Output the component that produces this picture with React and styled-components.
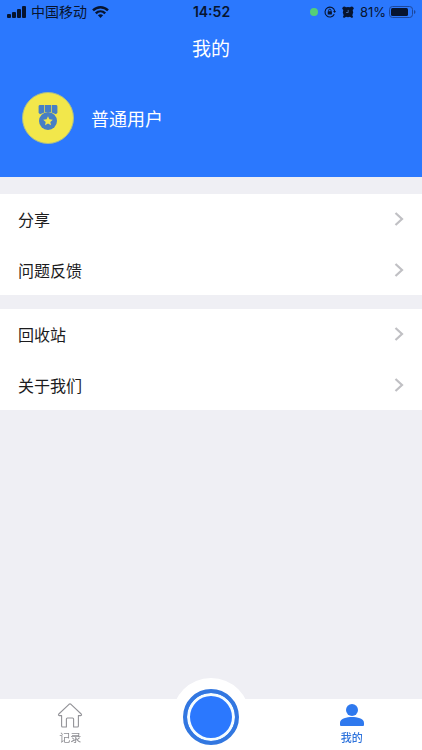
import React from "react";
import styled, { createGlobalStyle } from "styled-components";

const blue = "#2b78fe";
const ink = "#07142f";

const GlobalStyle = createGlobalStyle`
  * { box-sizing: border-box; }
  body {
    margin: 0;
    background: #efeff4;
    font-family: "Noto Sans CJK SC", "Liberation Sans", sans-serif;
  }
`;

const Page = styled.div`
  min-height: 100vh;
  display: flex;
  flex-direction: column;
`;

const Header = styled.header`
  background: ${blue};
  color: #fff;
  padding-bottom: 33px;
`;

const StatusBar = styled.div`
  height: 24px;
  padding: 0 6px 0 7px;
  display: grid;
  grid-template-columns: 1fr auto 1fr;
  align-items: center;
  color: ${ink};
  font-family: Inter, "Noto Sans CJK SC", sans-serif;
  font-size: 13px;
  line-height: 20px;
`;

const StatusGroup = styled.div`
  display: flex;
  align-items: center;
  gap: ${(p) => p.$gap}px;
  justify-content: ${(p) => (p.$end ? "flex-end" : "flex-start")};
`;

const Carrier = styled.span`
  font-size: 14px;
`;

const Clock = styled.time`
  font-size: 14px;
  font-weight: 600;
`;

const ActiveDot = styled.span`
  width: 8px;
  height: 8px;
  border-radius: 50%;
  background: #55cf78;
`;

const Title = styled.h1`
  margin: 0;
  height: 48px;
  font-size: 19px;
  line-height: 48px;
  font-weight: 400;
  text-align: center;
`;

const Profile = styled.section`
  display: flex;
  align-items: center;
  gap: 17px;
  padding: 20px 22px 0;
`;

const Avatar = styled.div`
  width: 52px;
  height: 52px;
  border-radius: 50%;
  background: #f2e74b;
  border: 1px solid #a9bd8c;
  display: grid;
  place-items: center;
`;

const UserName = styled.span`
  font-size: 18px;
  line-height: 26px;
`;

const Menu = styled.main`
  flex: 1;
  display: flex;
  flex-direction: column;
  gap: 14px;
  padding: 17px 0 40px;
`;

const MenuGroup = styled.nav`
  background: #fff;
  display: flex;
  flex-direction: column;
  gap: 1px;
`;

const MenuRow = styled.a`
  height: 50px;
  padding: 0 18px;
  display: flex;
  align-items: center;
  justify-content: space-between;
  color: #1c1c1e;
  font-size: 16px;
  line-height: 24px;
  text-decoration: none;
`;

const TabBar = styled.nav`
  position: sticky;
  bottom: 0;
  height: 51px;
  background: #fff;
  display: grid;
  grid-template-columns: 1fr 1fr 1fr;
  justify-items: center;
`;

const Tab = styled.a`
  display: flex;
  flex-direction: column;
  align-items: center;
  gap: 1px;
  padding-top: 4px;
  color: ${(p) => (p.$active ? "#2f74dc" : "#8e8e93")};
  font-size: 11px;
  line-height: 16px;
  font-weight: ${(p) => (p.$active ? 500 : 400)};
  text-decoration: none;
`;

const RecordHolder = styled.div`
  width: 78px;
  height: 78px;
  margin-top: -21px;
  border-radius: 50%;
  background: #fff;
  display: grid;
  place-items: center;
`;

const RecordButton = styled.button`
  width: 56px;
  height: 56px;
  padding: 0;
  border: 4px solid #3277e0;
  border-radius: 50%;
  background: ${blue};
  box-shadow: inset 0 0 0 3px #f4fcff;
`;

const SignalIcon = () => (
  <svg width="19" height="12" viewBox="0 0 19 12" fill={ink} aria-hidden="true">
    <rect x="0" y="8" width="4" height="4" rx="1" />
    <rect x="5" y="6" width="4" height="6" rx="1" />
    <rect x="10" y="3" width="4" height="9" rx="1" />
    <rect x="15" y="0" width="4" height="12" rx="1" />
  </svg>
);

const WifiIcon = () => (
  <svg width="17" height="12" viewBox="0 0 17 12" aria-hidden="true">
    <g fill="none" stroke={ink} strokeWidth="2.4">
      <path d="M1 4.4C5.2.2 11.8.2 16 4.4" />
      <path d="M3.8 7.3C6.5 4.7 10.5 4.7 13.2 7.3" />
    </g>
    <path d="M5.9 9.2C7.4 7.9 9.6 7.9 11.1 9.2L8.5 12Z" fill={ink} />
  </svg>
);

const RotationLockIcon = () => (
  <svg width="12" height="12" viewBox="0 0 12 12" fill="none" stroke={ink} aria-hidden="true">
    <path d="M10.3 8.3A4.9 4.9 0 1 1 10.7 5" strokeWidth="1.1" />
    <path d="M9 5h3l-1.3 2Z" fill={ink} stroke="none" />
    <rect x="3.7" y="5.3" width="4.2" height="3.3" rx=".5" fill={ink} stroke="none" />
    <path d="M4.6 5.5V4.4a1.2 1.2 0 0 1 2.4 0v1.1" strokeWidth=".9" />
  </svg>
);

const AlarmIcon = () => (
  <svg width="12" height="12" viewBox="0 0 12 12" aria-hidden="true">
    <g fill={ink}>
      <circle cx="6" cy="6.2" r="5.1" />
      <circle cx="2.3" cy="2.3" r="1.9" />
      <circle cx="9.7" cy="2.3" r="1.9" />
      <path d="M2 8.6.9 11.1l1.1.8L4.6 10.6ZM10 8.6l1.1 2.5-1.1.8L7.4 10.6Z" />
    </g>
    <path d="M6.2 3.9v2.6H4.1" fill="none" stroke="#4a78c4" strokeWidth=".8" />
  </svg>
);

const BatteryIcon = () => (
  <svg width="27" height="12" viewBox="0 0 27 12" aria-hidden="true">
    <rect x=".5" y=".5" width="23" height="11" rx="3" fill="none" stroke="#1d479b" />
    <rect x="2" y="2" width="17" height="8" rx="1.5" fill={ink} />
    <path d="M25 4v4q1.5-.5 1.5-2T25 4Z" fill="#1d479b" />
  </svg>
);

const MedalIcon = () => (
  <svg width="20" height="26" viewBox="0 0 20 26" aria-hidden="true">
    <g fill="#477fc4">
      <path d="M2 0h4.3v7.6L2 9.2.6 7.8V1.4Q.6 0 2 0Z" />
      <rect x="7" y="0" width="6" height="7" />
      <path d="M13.7 0H18q1.4 0 1.4 1.4v6.4L18 9.2l-4.3-1.6Z" />
      <circle cx="10" cy="16" r="9" />
    </g>
    <path
      d="m10 11.2 1.4 3.1 3.4.4-2.5 2.3.7 3.3-3-1.7-3 1.7.7-3.3-2.5-2.3 3.4-.4Z"
      fill="#f2e74b"
    />
  </svg>
);

const Chevron = () => (
  <svg width="10" height="14" viewBox="0 0 10 14" fill="none" aria-hidden="true">
    <path d="m1.5 1 6.5 6-6.5 6" stroke="#c0c0c4" strokeWidth="2.2" />
  </svg>
);

const HomeIcon = () => (
  <svg width="26" height="25" viewBox="0 0 26 25" fill="none" aria-hidden="true">
    <path
      d="M12 1.3Q13 .5 14 1.3L24.2 11q1 1.4-.6 1.6h-2.2V23q0 1-1 1h-3.8V16q0-1-1-1h-5.2q-1 0-1 1v8H5.6q-1 0-1-1V12.6H2.4Q.8 12.4 1.8 11Z"
      stroke="#929297"
      strokeWidth="1.1"
      strokeLinejoin="round"
    />
  </svg>
);

const UserIcon = () => (
  <svg width="26" height="25" viewBox="0 0 26 25" fill="#2f79ee" aria-hidden="true">
    <circle cx="13" cy="7" r="6" />
    <path d="M1 22v-2.3C1 15.4 8 14 13 14s12 1.4 12 5.7V22q0 1-1 1H2q-1 0-1-1Z" />
  </svg>
);

const groups = [
  ["分享", "问题反馈"],
  ["回收站", "关于我们"],
];

export default function App() {
  return (
    <Page>
      <GlobalStyle />
      <Header>
        <StatusBar>
          <StatusGroup $gap={5}>
            <SignalIcon />
            <Carrier>中国移动</Carrier>
            <WifiIcon />
          </StatusGroup>
          <Clock>14:52</Clock>
          <StatusGroup $gap={6} $end>
            <ActiveDot />
            <RotationLockIcon />
            <AlarmIcon />
            <StatusGroup $gap={3}>
              <span>81%</span>
              <BatteryIcon />
            </StatusGroup>
          </StatusGroup>
        </StatusBar>
        <Title>我的</Title>
        <Profile>
          <Avatar>
            <MedalIcon />
          </Avatar>
          <UserName>普通用户</UserName>
        </Profile>
      </Header>
      <Menu>
        {groups.map((items) => (
          <MenuGroup key={items[0]}>
            {items.map((label) => (
              <MenuRow key={label} href="#">
                {label}
                <Chevron />
              </MenuRow>
            ))}
          </MenuGroup>
        ))}
      </Menu>
      <TabBar>
        <Tab href="#">
          <HomeIcon />
          记录
        </Tab>
        <RecordHolder>
          <RecordButton type="button" aria-label="开始记录" />
        </RecordHolder>
        <Tab href="#" $active aria-current="page">
          <UserIcon />
          我的
        </Tab>
      </TabBar>
    </Page>
  );
}
